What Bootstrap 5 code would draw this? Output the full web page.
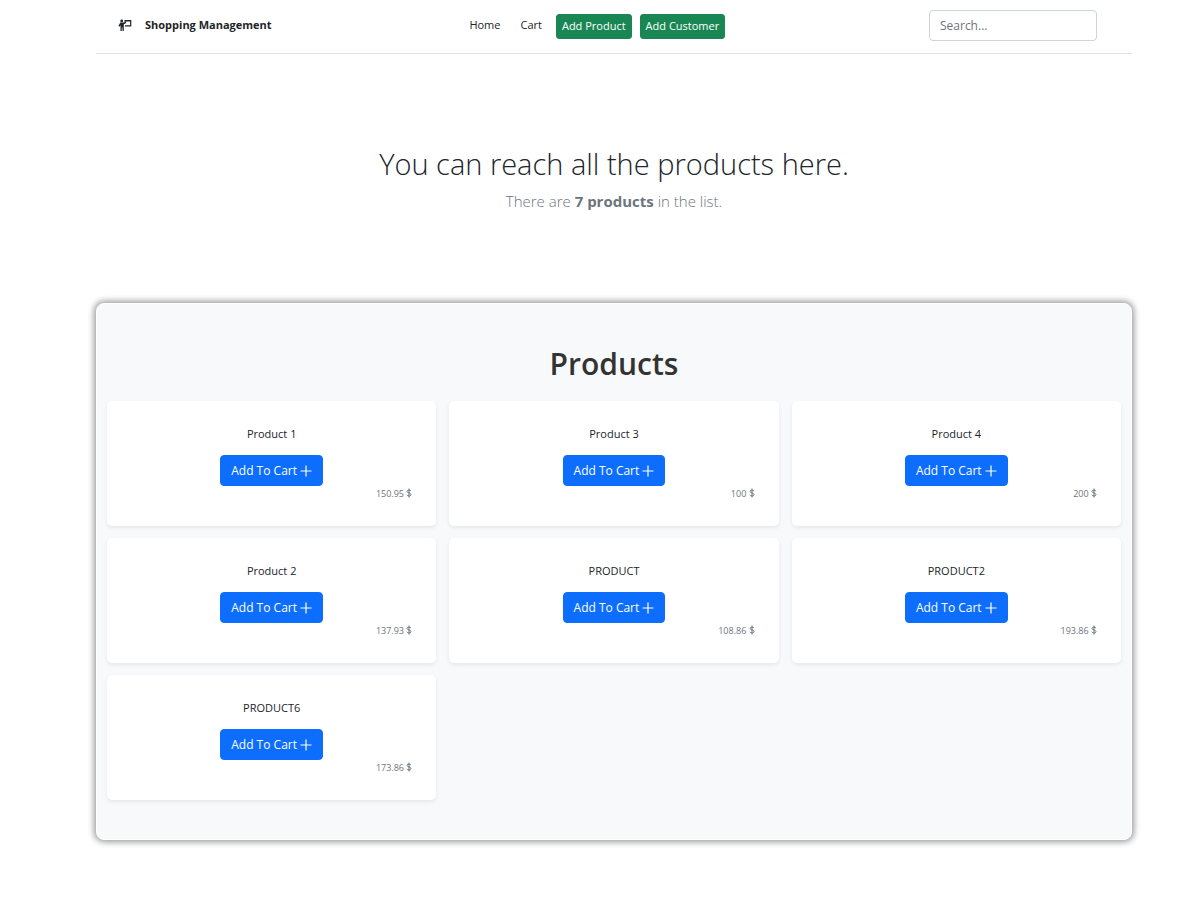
<!DOCTYPE html>
<html lang="en">
<head>
<meta charset="utf-8">
<meta name="viewport" content="width=device-width, initial-scale=1">
<title>Shopping Management</title>
<link rel="stylesheet" href="https://cdn.jsdelivr.net/npm/bootstrap@5.3.0/dist/css/bootstrap.min.css">
<style>
body{font-family:"Open Sans","Noto Sans",sans-serif;font-size:10px;line-height:16px;color:#212529}
.page{padding:0 49px 48px 96px}
.topbar{padding:10px 35px 12px 22px;min-height:54px}
.brand-link{font-size:11px;font-weight:700;gap:13px;padding-top:7px}
.menu-link{padding:7px 10px 0;font-size:11px}
.menu-link,.brand-link{color:#212529;text-decoration:none}
.menu-btn{font-size:11px;line-height:15px;padding:3px 5px 5px;border-radius:3px}
.search-box{width:168px;height:31px;font-size:12px;padding:4px 10px;border-radius:4px;border-color:#ced4da}
.search-box::placeholder{color:#6c757d}
.hero{padding:90px 0 92px}
.hero h1{font-size:29px;line-height:40px;font-weight:300;margin-bottom:7px}
.hero p{font-size:15px;line-height:20px;font-weight:300;margin:0}
.panel{background:#f8f9fa;border-radius:8px;border:1px solid #fff;padding:40px 10px 39px;box-shadow:0 0 6px 2px rgba(0,0,0,.4)}
.panel h2{font-size:30px;line-height:40px;font-weight:600;color:#333;margin-bottom:17px}
.product-grid{--bs-gutter-x:13px;--bs-gutter-y:12px}
.product{border:0;border-radius:5px;height:125px;padding:25px 24px 24px;box-shadow:0 2px 4px rgba(0,0,0,.075)}
.product h3{font-size:11px;line-height:16px;font-weight:400;margin-bottom:13px}
.product .btn{font-size:12px;line-height:20px;padding:5px 10px 4px;border-radius:4px}
.price{font-size:9px;line-height:15px;color:#6c757d}
svg{display:inline-block;fill:currentColor}
.product svg{vertical-align:-1px}
.product .btn svg{vertical-align:-2px}
</style>
<script src="https://cdn.jsdelivr.net/npm/bootstrap@5.3.0/dist/js/bootstrap.bundle.min.js"></script>
</head>
<body>
<svg class="d-none" aria-hidden="true">
<symbol id="plus" viewBox="0 0 12 12"><path d="M5.400.500h1.200v4.900h4.900v1.200H6.600v4.900H5.400V6.600H.500V5.400h4.900z"/></symbol>
<symbol id="dollar" viewBox="0 0 6 10"><path d="M3 .5v9M5 3.200C4.700 2 1 1.500 1 3.400c0 1.900 4 1.200 4 3.200C5 8.600 1.300 8.300.8 6.800" fill="none" stroke="currentColor" stroke-width="1"/></symbol>
</svg>
<div class="page">
<header class="topbar d-flex flex-wrap justify-content-between align-items-start border-bottom">
<a href="#" class="brand-link d-flex align-items-center"><svg width="14" height="13" viewBox="0 0 14 13" aria-hidden="true"><circle cx="3.700" cy="1.900" r="1.400"/><path d="M2.300 3.600h3.200l2.400-.7.400 1-2.500 1.300V12H4.500V8.500h-.7V12H2.500V6.200L1.400 7.800.4 7.100z"/><path d="M6.500 1.100h6.800v6.400H7V6.200h5.100V2.400H7.700v1H6.500z"/></svg>Shopping Management</a>
<nav class="d-flex align-items-start pe-3">
<a href="#" class="menu-link">Home</a>
<a href="#" class="menu-link me-1">Cart</a>
<button type="button" class="btn btn-success menu-btn me-2 mt-1">Add Product</button>
<button type="button" class="btn btn-success menu-btn mt-1">Add Customer</button>
</nav>
<form><input type="search" class="form-control search-box" placeholder="Search..." aria-label="Search"></form>
</header>
<main>
<section class="hero text-center">
<h1>You can reach all the products here.</h1>
<p class="text-secondary">There are <strong class="fw-bold">7 products</strong> in the list.</p>
</section>
<section class="panel">
<h2 class="text-center">Products</h2>
<div class="row product-grid row-cols-1 row-cols-sm-2 row-cols-md-3">
</div>
</section>
</main>
</div>
<template id="product-card">
<div class="col"><article class="card product text-center">
<h3></h3>
<div><button type="button" class="btn btn-primary">Add To Cart <svg width="12" height="12" aria-hidden="true"><use href="#plus"/></svg></button></div>
<div class="price text-end"><span></span> <svg width="6" height="10" aria-hidden="true"><use href="#dollar"/></svg></div>
</article></div>
</template>
<script>
const products = [["Product 1","150.95"],["Product 3","100"],["Product 4","200"],["Product 2","137.93"],["PRODUCT","108.86"],["PRODUCT2","193.86"],["PRODUCT6","173.86"]];
const grid = document.querySelector(".product-grid");
const template = document.getElementById("product-card");
for (const [name, price] of products) {
  const card = template.content.cloneNode(true);
  card.querySelector("h3").textContent = name;
  card.querySelector(".price span").textContent = price;
  grid.append(card);
}
</script>
</body>
</html>
